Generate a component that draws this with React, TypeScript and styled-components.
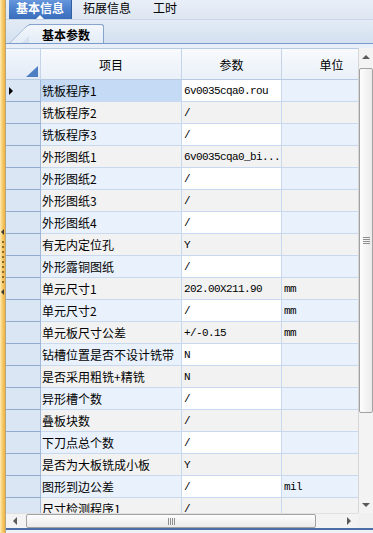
import React from 'react'
import styled, { createGlobalStyle, css } from 'styled-components'

const GlobalStyle = createGlobalStyle`
  html, body {
    margin: 0;
    padding: 0;
    background: #eef2f8;
  }
  #root {
    width: 373px;
    height: 533px;
    overflow: hidden;
  }
`

const Page = styled.div`
  display: flex;
  width: 373px;
  height: 533px;
  font-family: "Noto Sans CJK SC", "Liberation Sans", sans-serif;
  font-size: 12px;
  color: #000;
  background: #eef2f8;
`

// left splitter strip with collapse arrows
const Splitter = styled.div`
  flex: 0 0 6px;
  border-right: 1px solid #b7a679;
  background: linear-gradient(90deg, #fdebb6 0%, #f7c862 55%, #eeb24a 100%);
  display: flex;
  flex-direction: column;
  align-items: center;
  justify-content: center;
  gap: 6px;
  padding-bottom: 10px;
  box-sizing: border-box;
`

const SplitArrow = styled.div`
  width: 0;
  height: 0;
  border-top: 3px solid transparent;
  border-bottom: 3px solid transparent;
  border-right: 3px solid #3d3a33;
`

const SplitDots = styled.div`
  width: 2px;
  height: 42px;
  background: repeating-linear-gradient(180deg, #8c6c2c 0 2px, transparent 2px 5px);
`

const Main = styled.div`
  flex: 1;
  min-width: 0;
  display: flex;
  flex-direction: column;
`

const TabBar = styled.div`
  height: 20px;
  display: flex;
  align-items: stretch;
  padding-left: 3px;
  background: linear-gradient(180deg, #e9eff8 0%, #dde6f2 100%);
  border-bottom: 1px solid #c9d6e8;
  box-sizing: border-box;
`

const Tab = styled.div<{ $active?: boolean }>`
  position: relative;
  padding: 0 11px;
  line-height: 15px;
  white-space: nowrap;
  ${({ $active }) =>
    $active &&
    css`
      padding: 0 7px;
      color: #fff;
      font-weight: bold;
      background: linear-gradient(180deg, #6797dc 0%, #4a7fcc 50%, #3a6dbb 100%);
      border-right: 1px solid #335f9f;
      &::after {
        content: '';
        position: absolute;
        left: 50%;
        bottom: 0;
        margin-left: -4px;
        border-left: 4px solid transparent;
        border-right: 4px solid transparent;
        border-bottom: 4px solid #fff;
      }
    `}
`

const SubStrip = styled.div`
  height: 24px;
  display: flex;
  align-items: flex-end;
  padding-left: 23px;
  background: linear-gradient(180deg, #e3ebf6 0%, #d4e0f0 100%);
  border-bottom: 1px solid #7b9bc9;
  box-sizing: border-box;
`

const SubTab = styled.div`
  position: relative;
  height: 19px;
  padding: 0 13px 0 13px;
  display: flex;
  align-items: center;
  font-weight: bold;
  background: linear-gradient(180deg, #f3f7fc 0%, #e4ecf7 100%);
  border: 1px solid #86a4cd;
  border-left: none;
  border-bottom: none;
  border-radius: 0 3px 0 0;
  box-sizing: border-box;

  &::before {
    content: '';
    position: absolute;
    left: -20px;
    top: -1px;
    bottom: 0;
    width: 12px;
    background: linear-gradient(180deg, #f3f7fc 0%, #e4ecf7 100%);
    border-left: 1px solid #86a4cd;
    border-top: 1px solid #86a4cd;
    border-top-left-radius: 4px;
    transform: skewX(-45deg);
    transform-origin: bottom left;
  }
`

const SubTabLabel = styled.span`
  position: relative;
`

const Spacer = styled.div`
  height: 4px;
  background: #e9eff8;
`

const GridFrame = styled.div`
  height: 480px;
  display: grid;
  grid-template-columns: 1fr 15px;
  grid-template-rows: 1fr 15px;
`

const Viewport = styled.div`
  overflow: hidden;
  background: #fff;
  border-top: 1px solid #b9cbe3;
  box-sizing: border-box;
`

const cols = '35px 141px 100px 100px'

const HeaderRow = styled.div`
  display: grid;
  grid-template-columns: ${cols};
  height: 31px;
`

const HeaderCell = styled.div`
  display: flex;
  align-items: center;
  justify-content: center;
  background: linear-gradient(180deg, #f8fafd 0%, #eaf0f8 100%);
  border-right: 1px solid #c6d4e7;
  border-bottom: 1px solid #b8cae2;
  box-sizing: border-box;
`

const CornerCell = styled(HeaderCell)`
  position: relative;
  background: linear-gradient(180deg, #f3f7fc 0%, #e2eaf6 100%);

  &::after {
    content: '';
    position: absolute;
    right: 2px;
    bottom: 2px;
    border-left: 12px solid transparent;
    border-bottom: 11px solid #4f7ec3;
  }
`

const BodyRow = styled.div`
  display: grid;
  grid-template-columns: ${cols};
  height: 22px;
`

const RowHead = styled.div`
  display: flex;
  align-items: center;
  padding-left: 3px;
  background: #dbe6f5;
  border-right: 1px solid #a3b9d9;
  border-bottom: 1px solid #93abcd;
  box-sizing: border-box;
`

const RowPointer = styled.div`
  width: 0;
  height: 0;
  border-top: 4px solid transparent;
  border-bottom: 4px solid transparent;
  border-left: 4px solid #000;
`

const BodyCell = styled.div`
  display: flex;
  align-items: center;
  overflow: hidden;
  white-space: nowrap;
  border-right: 1px solid #c8d8ee;
  border-bottom: 1px solid #c8d8ee;
  box-sizing: border-box;
`

const ItemCell = styled(BodyCell)<{ $alt: boolean; $selected: boolean }>`
  padding-left: 1px;
  background: ${({ $alt, $selected }) => ($selected ? '#c5dbf5' : $alt ? '#f2f2f2' : '#e9f1fc')};
`

type Tone = 'edit' | 'plain' | 'alt'

const toneBg: Record<Tone, string> = {
  edit: '#ffffff',
  plain: '#e9f1fc',
  alt: '#f2f2f2',
}

const ValueCell = styled(BodyCell)<{ $tone: Tone }>`
  padding-left: 2px;
  font-family: "Liberation Mono", "DejaVu Sans Mono", monospace;
  font-size: 11px;
  letter-spacing: -0.6px;
  background: ${({ $tone }) => toneBg[$tone]};
`

// scrollbars
const VScroll = styled.div`
  display: flex;
  flex-direction: column;
  background: #f3f3f3;
  border-left: 1px solid #d6d6d6;
  box-sizing: border-box;
`

const HScroll = styled.div`
  display: flex;
  align-items: stretch;
  background: #f3f3f3;
  border-top: 1px solid #e0e0e0;
  box-sizing: border-box;
`

const ScrollCorner = styled.div`
  background: #f0f0f0;
`

const ArrowBtn = styled.div<{ $size: number }>`
  flex: 0 0 ${({ $size }) => $size}px;
  display: flex;
  align-items: center;
  justify-content: center;
`

const Arrow = styled.div<{ $dir: 'up' | 'down' | 'left' | 'right' }>`
  width: 0;
  height: 0;
  ${({ $dir }) =>
    $dir === 'up'
      ? css`
          border-left: 4px solid transparent;
          border-right: 4px solid transparent;
          border-bottom: 4px solid #5a5a5a;
        `
      : $dir === 'down'
      ? css`
          border-left: 4px solid transparent;
          border-right: 4px solid transparent;
          border-top: 4px solid #5a5a5a;
        `
      : $dir === 'left'
      ? css`
          border-top: 4px solid transparent;
          border-bottom: 4px solid transparent;
          border-right: 4px solid #5a5a5a;
        `
      : css`
          border-top: 4px solid transparent;
          border-bottom: 4px solid transparent;
          border-left: 4px solid #5a5a5a;
        `}
`

const Track = styled.div<{ $vertical?: boolean }>`
  flex: 1;
  display: flex;
  flex-direction: ${({ $vertical }) => ($vertical ? 'column' : 'row')};
`

const Thumb = styled.div<{ $vertical?: boolean }>`
  display: flex;
  align-items: center;
  justify-content: center;
  border: 1px solid #a2a2a2;
  border-radius: 2px;
  box-sizing: border-box;
  background: ${({ $vertical }) =>
    $vertical
      ? 'linear-gradient(90deg, #fdfdfd 0%, #ebebeb 100%)'
      : 'linear-gradient(180deg, #fdfdfd 0%, #ebebeb 100%)'};
`

const Grip = styled.div<{ $vertical?: boolean }>`
  ${({ $vertical }) =>
    $vertical
      ? css`
          width: 7px;
          height: 7px;
          background: repeating-linear-gradient(180deg, #8f8f8f 0 1px, transparent 1px 2px);
        `
      : css`
          width: 7px;
          height: 7px;
          background: repeating-linear-gradient(90deg, #8f8f8f 0 1px, transparent 1px 2px);
        `}
`

const BottomRule = styled.div`
  height: 2px;
  background: #4b6ea6;
`

interface Row {
  item: string
  value: string
  unit: string
}

const rows: Row[] = [
  { item: '铣板程序1', value: '6v0035cqa0.rou', unit: '' },
  { item: '铣板程序2', value: '/', unit: '' },
  { item: '铣板程序3', value: '/', unit: '' },
  { item: '外形图纸1', value: '6v0035cqa0_bi...', unit: '' },
  { item: '外形图纸2', value: '/', unit: '' },
  { item: '外形图纸3', value: '/', unit: '' },
  { item: '外形图纸4', value: '/', unit: '' },
  { item: '有无内定位孔', value: 'Y', unit: '' },
  { item: '外形露铜图纸', value: '/', unit: '' },
  { item: '单元尺寸1', value: '202.00X211.90', unit: 'mm' },
  { item: '单元尺寸2', value: '/', unit: 'mm' },
  { item: '单元板尺寸公差', value: '+/-0.15', unit: 'mm' },
  { item: '钻槽位置是否不设计铣带', value: 'N', unit: '' },
  { item: '是否采用粗铣+精铣', value: 'N', unit: '' },
  { item: '异形槽个数', value: '/', unit: '' },
  { item: '叠板块数', value: '/', unit: '' },
  { item: '下刀点总个数', value: '/', unit: '' },
  { item: '是否为大板铣成小板', value: 'Y', unit: '' },
  { item: '图形到边公差', value: '/', unit: 'mil' },
  { item: '尺寸检测程序1', value: '/', unit: '' },
]

export default function App() {
  return (
    <>
      <GlobalStyle />
      <Page>
        <Splitter>
          <SplitArrow />
          <SplitDots />
          <SplitArrow />
        </Splitter>
        <Main>
          <TabBar>
            <Tab $active>基本信息</Tab>
            <Tab>拓展信息</Tab>
            <Tab>工时</Tab>
          </TabBar>
          <SubStrip>
            <SubTab>
              <SubTabLabel>基本参数</SubTabLabel>
            </SubTab>
          </SubStrip>
          <Spacer />
          <GridFrame>
            <Viewport>
              <HeaderRow>
                <CornerCell />
                <HeaderCell>项目</HeaderCell>
                <HeaderCell>参数</HeaderCell>
                <HeaderCell>单位</HeaderCell>
              </HeaderRow>
              {rows.map((r, i) => {
                const alt = i % 2 === 1
                return (
                  <BodyRow key={r.item}>
                    <RowHead>{i === 0 && <RowPointer />}</RowHead>
                    <ItemCell $alt={alt} $selected={i === 0}>
                      {r.item}
                    </ItemCell>
                    <ValueCell $tone={alt ? 'alt' : 'edit'}>{r.value}</ValueCell>
                    <ValueCell $tone={alt ? 'alt' : 'plain'}>{r.unit}</ValueCell>
                  </BodyRow>
                )
              })}
            </Viewport>
            <VScroll>
              <ArrowBtn $size={18}>
                <Arrow $dir="up" />
              </ArrowBtn>
              <Track $vertical>
                <Thumb $vertical style={{ marginTop: 2, height: 345 }}>
                  <Grip $vertical />
                </Thumb>
              </Track>
              <ArrowBtn $size={17}>
                <Arrow $dir="down" />
              </ArrowBtn>
            </VScroll>
            <HScroll>
              <ArrowBtn $size={18}>
                <Arrow $dir="left" />
              </ArrowBtn>
              <Track>
                <Thumb style={{ marginLeft: 2, width: 290 }}>
                  <Grip />
                </Thumb>
              </Track>
              <ArrowBtn $size={18}>
                <Arrow $dir="right" />
              </ArrowBtn>
            </HScroll>
            <ScrollCorner />
          </GridFrame>
          <BottomRule />
        </Main>
      </Page>
    </>
  )
}
